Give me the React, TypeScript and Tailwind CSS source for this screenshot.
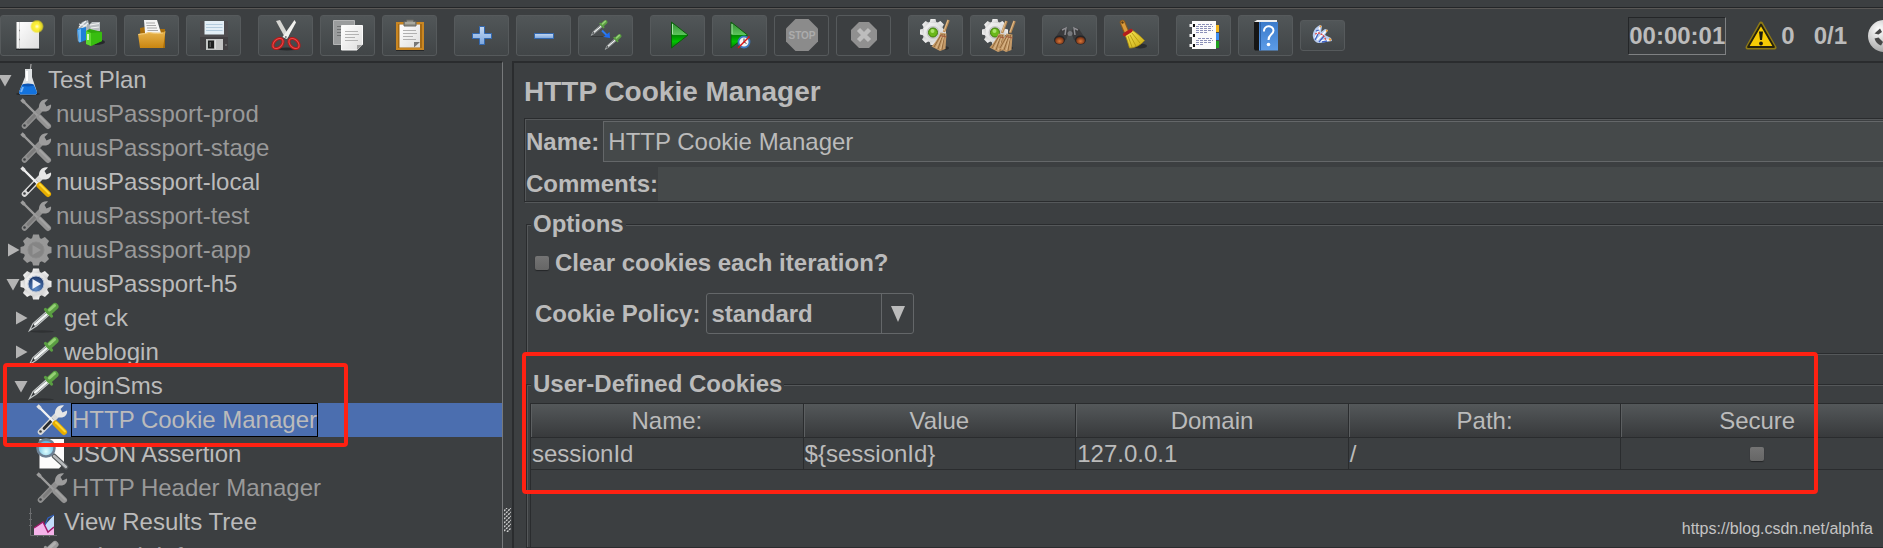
import type { ReactNode } from 'react';

type IconProps = { children: ReactNode; size?: number };

function Icon({ children, size = 30 }: IconProps) {
  return (
    <svg
      width={size}
      height={size}
      viewBox={`0 0 ${size} ${size}`}
      className="block shrink-0 overflow-visible"
      aria-hidden="true"
    >
      {children}
    </svg>
  );
}

function Gradients() {
  return (
    <svg width="0" height="0" className="absolute" aria-hidden="true">
      <defs>
        <linearGradient id="paper" x1="0" y1="0" x2="1" y2="1">
          <stop offset="0" stopColor="#ffffff" />
          <stop offset="1" stopColor="#dedede" />
        </linearGradient>
        <radialGradient id="glow">
          <stop offset="0" stopColor="#fffde0" />
          <stop offset="0.35" stopColor="#fff23a" />
          <stop offset="0.75" stopColor="#f3e51c" stopOpacity="0.85" />
          <stop offset="1" stopColor="#f3e51c" stopOpacity="0" />
        </radialGradient>
        <linearGradient id="folder" x1="0" y1="0" x2="0" y2="1">
          <stop offset="0" stopColor="#e9b64f" />
          <stop offset="1" stopColor="#c98510" />
        </linearGradient>
        <linearGradient id="blue" x1="0" y1="0" x2="0" y2="1">
          <stop offset="0" stopColor="#c6d9f2" />
          <stop offset="1" stopColor="#7ba6de" />
        </linearGradient>
        <linearGradient id="play" x1="0" y1="0" x2="0" y2="1">
          <stop offset="0" stopColor="#2f8f2f" />
          <stop offset="0.48" stopColor="#5cc35c" />
          <stop offset="0.52" stopColor="#008a00" />
          <stop offset="0.75" stopColor="#00c400" />
          <stop offset="1" stopColor="#0a7a0a" />
        </linearGradient>
        <linearGradient id="book" x1="0" y1="0" x2="0" y2="1">
          <stop offset="0" stopColor="#3b7bcb" />
          <stop offset="1" stopColor="#5c9ce8" />
        </linearGradient>
        <linearGradient id="straw" x1="0" y1="0" x2="1" y2="1">
          <stop offset="0" stopColor="#f7ea5a" />
          <stop offset="1" stopColor="#c9a90f" />
        </linearGradient>
        <linearGradient id="gear" x1="0" y1="0" x2="1" y2="1">
          <stop offset="0" stopColor="#f6f6f6" />
          <stop offset="1" stopColor="#cfcfcf" />
        </linearGradient>
        <radialGradient id="steel" cx="0.35" cy="0.3" r="0.8">
          <stop offset="0" stopColor="#ffffff" />
          <stop offset="1" stopColor="#9c9c9c" />
        </radialGradient>
        <radialGradient id="lens" cx="0.5" cy="0.7" r="0.6">
          <stop offset="0" stopColor="#e0ffff" />
          <stop offset="1" stopColor="#5bb2dd" />
        </radialGradient>
        <radialGradient id="amber" cx="0.5" cy="0.6" r="0.6">
          <stop offset="0" stopColor="#d9773a" />
          <stop offset="1" stopColor="#6a2a10" />
        </radialGradient>
        <radialGradient id="navy" cx="0.5" cy="0.8" r="0.8">
          <stop offset="0" stopColor="#5a8ac8" />
          <stop offset="1" stopColor="#1c3668" />
        </radialGradient>
      </defs>
    </svg>
  );
}

const GEAR_TEETH = [0, 45, 90, 135, 180, 225, 270, 315];

function Gear({ cx, cy, r, fill }: { cx: number; cy: number; r: number; fill: string }) {
  return (
    <g fill={fill}>
      <circle cx={cx} cy={cy} r={r * 0.81} />
      {GEAR_TEETH.map((angle) => (
        <path
          key={angle}
          d={`M${cx - r * 0.27} ${cy - r * 0.7}L${cx - r * 0.19} ${cy - r}H${cx + r * 0.19}L${cx + r * 0.27} ${cy - r * 0.7}Z`}
          transform={`rotate(${angle} ${cx} ${cy})`}
        />
      ))}
    </g>
  );
}

function Pipette({ muted = false }: { muted?: boolean }) {
  const bulb = muted ? '#9a9a9a' : '#5a9e42';
  const shine = muted ? '#b0b0b0' : '#94d074';
  return (
    <g>
      <path
        d="M0.5 27.5 4 20.5 17 9 20 12 7.5 23Z"
        fill={muted ? '#8c8c8c' : '#303436'}
        stroke={muted ? '#a5a5a5' : '#c4c8c8'}
        strokeWidth="1.2"
      />
      <path d="M6 21.5 18 11" stroke={muted ? '#b5b5b5' : '#f2f5f5'} strokeWidth="2.4" strokeLinecap="round" />
      <path d="M16.500 6.500 22.500 13" stroke={bulb} strokeWidth="3.2" strokeLinecap="round" />
      <path d="M20.5 8.5 26 3.5" stroke={bulb} strokeWidth="7" strokeLinecap="round" />
      <path d="M20.5 7 25.500 2.5" stroke={shine} strokeWidth="3" strokeLinecap="round" />
    </g>
  );
}

function SamplerIcon({ muted = false }: { muted?: boolean }) {
  return (
    <Icon>
      <ellipse cx="13" cy="28.5" rx="12" ry="1.2" fill="#222426" opacity="0.5" />
      <Pipette muted={muted} />
    </Icon>
  );
}

function StrawBroom() {
  return (
    <g>
      <path d="M28.5 0 24 12" stroke="#b98a55" strokeWidth="2.6" />
      <path d="M28 0 24 11" stroke="#e2bf8d" strokeWidth="1" />
      <path d="M20.5 12.5 26.5 13.5 25.5 29 20 31 11.5 26.5C15 23 18.5 18 20.5 12.5Z" fill="#c49a68" />
      <path d="M21.5 14 14 27M23 14 18 29M24.5 14 22 30" stroke="#8d6337" strokeWidth="0.9" />
      <path d="M22.3 15 16 28M24 16 20.5 29" stroke="#e7c79c" strokeWidth="0.7" />
      <path d="M20 15.5 26.5 17" stroke="#a5583c" strokeWidth="1" />
    </g>
  );
}

function ClearGear() {
  return (
    <g>
      <Gear cx={13} cy={12} r={13} fill="url(#gear)" />
      <circle cx="13" cy="12.5" r="6.5" fill="#c6c6c6" />
      <circle cx="13" cy="12.5" r="4.5" fill="#6ab81a" stroke="#3f7d0c" />
      <circle cx="12.5" cy="11" r="2" fill="#a9e36a" />
    </g>
  );
}

function NewIcon() {
  return (
    <Icon>
      <path d="M4 29H28V30H4Z" fill="#242628" />
      <path d="M4.5 2H27V28.5H4.5Z" fill="url(#paper)" />
      <path d="M7.5 2V28.5" stroke="#cfcfcf" />
      <path d="M7 10.5H8M7 19.5H8" stroke="#888888" strokeWidth="1.5" />
      <circle cx="25" cy="6.5" r="7" fill="url(#glow)" />
    </Icon>
  );
}

function TemplatesIcon() {
  return (
    <Icon>
      <ellipse cx="22" cy="22" rx="9" ry="3" fill="#25282a" />
      <path d="M3 10 8 2 14 0 16 8 4 22Z" fill="#a9b2b8" />
      <path d="M5 7 12 1M7 9 14 3M5 4 13 6" stroke="#eef1f2" strokeWidth="1.2" />
      <path d="M15 5 18 2 26 2V11L16 12Z" fill="#b9bfc2" />
      <path d="M16 5 25 3.500M17 8 25 7" stroke="#f2f2f2" strokeWidth="1.2" />
      <path d="M3 9 12 7V20L5 23Z" fill="#1d7fd8" />
      <path d="M4 10 7 9V22L5 22Z" fill="#6db8f5" />
      <path d="M12 11 16 9 28 12V21L17 26 12 24Z" fill="#2fa90c" />
      <path d="M12 11 17 13V26L12 24Z" fill="#5ed82f" />
      <path d="M14 14V20" stroke="#f4fff0" strokeWidth="1.6" />
      <path d="M17 13 28 12V21L17 26Z" fill="#38bd10" />
    </Icon>
  );
}

function OpenIcon() {
  return (
    <Icon>
      <path d="M4 8 9 7 11 9H29V28H5Z" fill="#a96e0b" />
      <path d="M8 0H21L25 13H9Z" fill="#f5f5f5" />
      <path d="M10 3H19M10.5 5.5H20M11 8H21M11.5 10.5H22" stroke="#a7a7a7" />
      <path d="M2 14C7 13 10 13.5 13 12 17 13 22 13 27 12.5L29.5 11 27 28H4Z" fill="url(#folder)" />
      <path d="M2.5 14.5C7 13.5 10 14 13 12.5 18 13.5 23 13.5 27 13" stroke="#f4d084" fill="none" />
    </Icon>
  );
}

function SaveIcon() {
  return (
    <Icon>
      <path d="M2 1H30V30H3L2 29Z" fill="#4f4c4f" />
      <path d="M2 17H30V30H3L2 29Z" fill="#423f42" />
      <path d="M6.5 1H26V14.5H6.5Z" fill="#e4eef6" />
      <path d="M8 4.5H24.5M8 7.5H24.5M8 10.5H24.5" stroke="#b4cbdd" />
      <path d="M8 19H25V30H8Z" fill="#c3c3c3" />
      <path d="M10 20.5H16V28.5H10Z" fill="#1f1f1f" />
      <path d="M11.5 22H13V27H11.5Z" fill="#555555" />
      <path d="M17.5 20V29" stroke="#dddddd" />
      <circle cx="28" cy="25" r="1" fill="#777777" />
    </Icon>
  );
}

function CutIcon() {
  return (
    <Icon>
      <ellipse cx="17" cy="29" rx="11" ry="1.5" fill="#26292b" />
      <path d="M6 1 10 0 19 16 15.500 18.5Z" fill="#d6d6d2" />
      <path d="M24.5 0 26 2.500 17 19 12.5 17Z" fill="#f1f1ee" />
      <ellipse cx="8" cy="23.5" rx="6" ry="4" transform="rotate(-45 8 23.5)" fill="none" stroke="#b81818" strokeWidth="3" />
      <ellipse cx="24" cy="23.5" rx="6" ry="4" transform="rotate(45 24 23.5)" fill="none" stroke="#b81818" strokeWidth="3" />
      <ellipse cx="8" cy="23.5" rx="6" ry="4" transform="rotate(-45 8 23.5)" fill="none" stroke="#e84c4c" strokeWidth="1" />
      <ellipse cx="24" cy="23.5" rx="6" ry="4" transform="rotate(45 24 23.5)" fill="none" stroke="#e84c4c" strokeWidth="1" />
      <circle cx="15.8" cy="17" r="1" fill="#777777" />
    </Icon>
  );
}

function CopyIcon() {
  return (
    <Icon>
      <path d="M1.5 0.5H22.5V24.5H1.5Z" fill="#9a9c9d" stroke="#b3b4b5" />
      <path d="M5 6.5H9M5 9.5H9M5 12.5H9M5 15.5H9" stroke="#6f7172" />
      <path d="M9.5 5.5H30.5V24.5L25 30H9.5Z" fill="url(#paper)" stroke="#fafafa" />
      <path d="M13 11.5H26M13 14.5H27M13 17.5H23M13 20.5H26" stroke="#b3b3b3" />
      <path d="M25 30V25H30.5Z" fill="#a0a0a0" />
    </Icon>
  );
}

function PasteIcon() {
  return (
    <Icon>
      <path d="M2 30H30V31H2Z" fill="#26282a" />
      <path d="M3 3H29V29H3Z" fill="#a56a14" stroke="#c98622" strokeWidth="2" />
      <path d="M5.5 4.5H26V27.5H5.5Z" fill="url(#paper)" />
      <path d="M9 10.5H22M9 13.5H23M9 16.5H19M9 19.5H22" stroke="#b0b0b0" />
      <path d="M20 27.5V22H26Z" fill="#777777" />
      <path d="M10 1.5H12.5V0H19.5V1.5H22V6H10Z" fill="#8f8f86" stroke="#65655e" />
      <path d="M11 3H21" stroke="#c2c2b8" />
    </Icon>
  );
}

function AddIcon() {
  return (
    <Icon>
      <path
        d="M13.5 6.5H18.5V13.5H25.5V18.5H18.5V24.5H13.5V18.5H6.5V13.5H13.5Z"
        fill="url(#blue)"
        stroke="#3268b0"
      />
    </Icon>
  );
}

function RemoveIcon() {
  return (
    <Icon>
      <path d="M6.5 13.5H25.5V18.5H6.5Z" fill="url(#blue)" stroke="#3268b0" />
    </Icon>
  );
}

function ToggleIcon() {
  return (
    <Icon>
      <path d="M1 16.5H13" stroke="#2b2d2f" opacity="0.6" />
      <g transform="translate(1 0) scale(0.56)">
        <Pipette />
      </g>
      <g transform="translate(15 14) scale(0.56)">
        <Pipette />
      </g>
      <path d="M12 10.5 17 15.5" stroke="#2b7bf0" strokeWidth="2" />
      <path d="M20 18 13.500 17 19.500 12Z" fill="#1e6cf0" />
    </Icon>
  );
}

function StartIcon() {
  return (
    <Icon>
      <path d="M9.5 2 26 15 9.5 28Z" fill="url(#play)" stroke="#0c5c0c" />
      <path d="M10.5 4V14" stroke="#a9e3a9" />
    </Icon>
  );
}

function StartNoPauseIcon() {
  return (
    <Icon>
      <path d="M7 2 23.5 15 7 28Z" fill="url(#play)" stroke="#0c5c0c" />
      <path d="M8 4V14" stroke="#a9e3a9" />
      <circle cx="20" cy="22" r="5.5" fill="#f3f3f3" stroke="#3a78c0" strokeWidth="1.8" />
      <path d="M20 22V18.5M20 22 22.5 23.5" stroke="#444444" />
      <path d="M14 28 25.5 16.5" stroke="#dd1212" strokeWidth="1.5" />
    </Icon>
  );
}

function StopIcon() {
  return (
    <Icon>
      <path d="M9.5 -1H22.5L32 8.5V21.5L22.5 31H9.5L0 21.5V8.5Z" fill="#8b8b8b" />
      <text
        x="16"
        y="19"
        textAnchor="middle"
        fontFamily="'Liberation Sans', Arial, sans-serif"
        fontSize="10"
        fontWeight="bold"
        fill="#acacac"
      >
        STOP
      </text>
    </Icon>
  );
}

function ShutdownIcon() {
  return (
    <Icon>
      <path d="M11 2H21L29 10V20L21 28H11L3 20V10Z" fill="#909090" />
      <path d="M10.5 9.5 21.5 20.5M21.5 9.5 10.5 20.5" stroke="#bdbdbd" strokeWidth="4.5" />
    </Icon>
  );
}

function ClearIcon() {
  return (
    <Icon>
      <ellipse cx="23" cy="28" rx="6" ry="2" fill="#2c2e30" />
      <ClearGear />
      <StrawBroom />
    </Icon>
  );
}

function ClearAllIcon() {
  return (
    <Icon>
      <ellipse cx="25" cy="28" rx="6" ry="2" fill="#2c2e30" />
      <ClearGear />
      <g transform="translate(-4 1)">
        <StrawBroom />
      </g>
      <g transform="translate(4 1)">
        <StrawBroom />
      </g>
    </Icon>
  );
}

function SearchIcon() {
  return (
    <Icon>
      <path d="M7 9 12 7 15 12 12 20 4 22 1 18Z" fill="#3a3a3c" />
      <path d="M25 9 20 7 17 12 20 20 28 22 31 18Z" fill="#3a3a3c" />
      <path d="M8 10 12 8 11 15" stroke="#8c8c90" strokeWidth="1.5" fill="none" />
      <path d="M24 10 20 8 21 15" stroke="#8c8c90" strokeWidth="1.5" fill="none" />
      <circle cx="16" cy="13.5" r="2.5" fill="#77787c" />
      <ellipse cx="5.5" cy="20" rx="5.5" ry="4.5" fill="#252527" />
      <ellipse cx="26.5" cy="20" rx="5.5" ry="4.5" fill="#252527" />
      <ellipse cx="5.5" cy="20.5" rx="4.3" ry="3.5" fill="url(#amber)" />
      <ellipse cx="26.5" cy="20.5" rx="4.3" ry="3.5" fill="url(#amber)" />
    </Icon>
  );
}

function BroomIcon() {
  return (
    <Icon>
      <ellipse cx="24" cy="26" rx="7" ry="2.5" fill="#2b2d2f" />
      <path d="M6.5 2.5 10.500 12" stroke="#8d5a1c" strokeWidth="5.5" strokeLinecap="round" />
      <path d="M6.5 2.5 10.500 12" stroke="#d99b3c" strokeWidth="3.4" strokeLinecap="round" />
      <circle cx="6.5" cy="2.5" r="1.2" fill="#5b3a12" />
      <path
        d="M9 15 16 10C21 13 25 17 28.5 20.5 25 25 19 28 13.5 28 12 23 11 19 9 15Z"
        fill="url(#straw)"
        stroke="#a98a10"
        strokeWidth="0.8"
      />
      <path d="M12 16 16 27M14 15 20 26M16 13 24 23" stroke="#b5980f" strokeWidth="0.9" />
      <path d="M8.5 14.500 15 10.5" stroke="#b31d1d" strokeWidth="3.5" strokeLinecap="round" />
    </Icon>
  );
}

function LogIcon() {
  return (
    <Icon>
      <path d="M27 5H31V12H27Z" fill="#f2b51c" />
      <path d="M27 13H31V20H27Z" fill="#3f8ff0" />
      <path d="M27 21H31V28H27Z" fill="#1fa01f" />
      <path d="M4 1H28V29H4Z" fill="#fbfbfb" />
      <path
        d="M10 4.5H24M8 6.5H25M8 8.5H23M8 10.5H25M8 12.5H20M10 18.5H24M8 20.5H25M8 22.5H23M8 24.5H16"
        stroke="#8b90b8"
        strokeDasharray="3 1"
      />
      <path d="M1.5 5.5H6M1.5 15.5H6M1.5 25.5H6" stroke="#f5f5f5" strokeWidth="3" />
      <path d="M5 5.5H7M5 15.5H7M5 25.5H7" stroke="#111111" strokeWidth="3" />
    </Icon>
  );
}

function HelpIcon() {
  return (
    <Icon>
      <path d="M4 2 7 0H27V2H8Z" fill="#eeeeee" />
      <path d="M4 2H9V30.5H5L4 29Z" fill="#161616" />
      <path d="M9 2H28V30.5H9Z" fill="url(#book)" />
      <path d="M10.5 2V30.5" stroke="#2a61a8" />
      <path
        d="M14 11.5C13.5 4.5 23.5 5 23.5 10.5 23.5 14.5 18.5 14 18.5 20"
        fill="none"
        stroke="#ffffff"
        strokeWidth="2"
      />
      <circle cx="18.5" cy="24.5" r="1.8" fill="#ffffff" />
    </Icon>
  );
}

function FeatherIcon() {
  return (
    <Icon size={20}>
      <path d="M1 12C0 8 3 2 8 0L10 1 9 7 13 4 16 5 13 10 19 13 20 16 8 18C4 18 2 16 1 12Z" fill="#b9cdf0" />
      <path d="M3 13 8 2M5 15 14 6M7 16 18 15" stroke="#ffffff" strokeWidth="1.5" />
      <path d="M3 15 6 9M7 17 12 11M4 6 7 5M10 17 15 16" stroke="#3f62c4" strokeWidth="1.3" />
      <path d="M3 9 7 8 11 10 14 15" stroke="#e03d3d" strokeWidth="1.2" fill="none" strokeDasharray="2 1" />
      <path d="M8 1 9 2M14 5.5 15.5 6M17 14 19 15" stroke="#f29a2e" strokeWidth="2" />
    </Icon>
  );
}

function FlaskIcon() {
  return (
    <Icon>
      <ellipse cx="15" cy="29" rx="12" ry="1.5" fill="#222426" />
      <path d="M17 8 18 -1" stroke="#a8a8a8" strokeWidth="1.2" />
      <path d="M12 4H19V12L24 27C24 29 23 29.5 22 29.5H8C7 29.5 6 29 6 27L12 12Z" fill="#dfe2e4" />
      <path d="M9 20H21L24 27C24 29 23 29.5 22 29.5H8C7 29.5 6 29 6 27Z" fill="#1372dd" />
      <ellipse cx="15" cy="20" rx="6" ry="1.5" fill="#0b54b4" />
      <path d="M8 27 10 22" stroke="#7ab5f5" strokeWidth="2" />
      <path d="M14 6V16" stroke="#ffffff" strokeWidth="2" />
    </Icon>
  );
}

function ToolsIcon({ muted = false }: { muted?: boolean }) {
  return (
    <Icon>
      <path d="M3.5 27 21 9" stroke={muted ? '#8f8f8f' : '#d9d9d9'} strokeWidth="5.5" strokeLinecap="round" />
      <path d="M7 23.5 15 15" stroke={muted ? '#7c7c7c' : '#2a2c2e'} strokeWidth="2.8" strokeLinecap="round" />
      <circle cx="3.5" cy="26.5" r="1.3" fill="#3c3f41" />
      <path
        d="M18 9.500C17.500 4 21 -0.5 27 0.5L23.500 4 25.500 7.500 30 5.500C31 10.500 26 14 20.500 12Z"
        fill={muted ? '#9c9c9c' : '#e6e6e6'}
      />
      <path d="M2 2 17 17" stroke={muted ? '#9c9c9c' : '#f2f2f2'} strokeWidth="2.4" />
      <path d="M0.5 0.5 3.5 3.5" stroke={muted ? '#9c9c9c' : '#e2e2e2'} strokeWidth="3.4" />
      <path d="M18.5 18.5 27 27" stroke={muted ? '#939393' : '#e6ac00'} strokeWidth="6" strokeLinecap="round" />
      <path d="M19 17.5 28 26.5" stroke={muted ? '#a2a2a2' : '#ffd931'} strokeWidth="2" strokeLinecap="round" />
    </Icon>
  );
}

function GroupIcon({ muted = false }: { muted?: boolean }) {
  return (
    <Icon>
      <Gear cx={15} cy={15} r={15.5} fill={muted ? '#989898' : 'url(#gear)'} />
      <circle
        cx="15"
        cy="15"
        r="8"
        fill={muted ? '#858585' : 'url(#navy)'}
        stroke={muted ? '#8b8b8b' : '#b9c3d3'}
      />
      <path d="M11.500 10 20 15 11.500 20Z" fill={muted ? '#989898' : '#f0f4fa'} />
    </Icon>
  );
}

function AssertionIcon() {
  return (
    <Icon>
      <path d="M2.5 0H27V24L22 29.5H2.5Z" fill="#fcfcfc" />
      <path d="M17 17 29 28" stroke="#55585a" strokeWidth="5" strokeLinecap="round" />
      <path d="M17 17 29 28" stroke="#b9bcbe" strokeWidth="2.5" strokeLinecap="round" />
      <circle cx="9" cy="9" r="8.5" fill="url(#lens)" stroke="#6d8094" strokeWidth="2.5" />
    </Icon>
  );
}

function ResultsIcon() {
  return (
    <Icon>
      <path
        d="M1.5 1V28.5H28M0 6.5H3M0 12.5H3M0 18.5H3M8.5 27V30M14.5 27V30M20.5 27V30"
        stroke="#6a6c6e"
        fill="none"
      />
      <path d="M16 18 25 8V22L19 25 14 19Z" fill="#c3dcfa" />
      <path d="M16 18 19 11 25 8" stroke="#2f5fc0" strokeWidth="1.2" fill="none" />
      <path d="M5 21 14 15 19 25 25 19V28H5Z" fill="#f5b3ea" />
      <path d="M5 21 14 15 19 25 25 20" stroke="#a01a6a" strokeWidth="1.5" fill="none" />
    </Icon>
  );
}

function WarningIcon() {
  return (
    <svg width="32" height="30" viewBox="0 0 32 30" aria-hidden="true">
      <path
        d="M16 2.5 29.5 26.5H2.5Z"
        fill="#f7cc05"
        stroke="#8e7a14"
        strokeWidth="4"
        strokeLinejoin="round"
      />
      <path
        d="M16 3.5 29 26H3Z"
        fill="#f7cc05"
        stroke="#25220f"
        strokeWidth="1.8"
        strokeLinejoin="round"
      />
      <path d="M14 10.5H18L17 19H15Z" fill="#1b1a10" />
      <circle cx="16" cy="22.5" r="1.9" fill="#1b1a10" />
    </svg>
  );
}

function StatusIcon() {
  return (
    <svg width="32" height="32" viewBox="0 0 32 32" className="shrink-0" aria-hidden="true">
      <circle cx="16" cy="16" r="16" fill="url(#steel)" />
      <path d="M6.500 13.500 12 8.500 14 12 10.500 14.500Z" fill="#474747" />
      <path d="M6.500 18.500 10.500 17.500 15 22 13 25.500C10 24.500 7.500 22 6.500 18.500Z" fill="#474747" />
    </svg>
  );
}

type Tool = { label: string; icon: ReactNode; disabled?: boolean };

const toolGroups: Tool[][] = [
  [
    { label: 'New', icon: <NewIcon /> },
    { label: 'Templates', icon: <TemplatesIcon /> },
    { label: 'Open', icon: <OpenIcon /> },
    { label: 'Save', icon: <SaveIcon /> },
  ],
  [
    { label: 'Cut', icon: <CutIcon /> },
    { label: 'Copy', icon: <CopyIcon /> },
    { label: 'Paste', icon: <PasteIcon /> },
  ],
  [
    { label: 'Expand All', icon: <AddIcon /> },
    { label: 'Collapse All', icon: <RemoveIcon /> },
    { label: 'Toggle', icon: <ToggleIcon /> },
  ],
  [
    { label: 'Start', icon: <StartIcon /> },
    { label: 'Start no pauses', icon: <StartNoPauseIcon /> },
    { label: 'Stop', icon: <StopIcon />, disabled: true },
    { label: 'Shutdown', icon: <ShutdownIcon />, disabled: true },
  ],
  [
    { label: 'Clear', icon: <ClearIcon /> },
    { label: 'Clear All', icon: <ClearAllIcon /> },
  ],
  [
    { label: 'Search', icon: <SearchIcon /> },
    { label: 'Reset Search', icon: <BroomIcon /> },
  ],
  [
    { label: 'Function Helper', icon: <LogIcon /> },
    { label: 'Help', icon: <HelpIcon /> },
  ],
];

function Toolbar() {
  return (
    <header className="mt-[7px] flex shrink-0 items-center border-t border-[#242628] pt-[7px] pb-[5px] shadow-[inset_0_1px_0_#5a5856]">
      <div className="flex shrink-0 gap-[17px]">
        {toolGroups.map((group) => (
          <div key={group[0].label} className="flex gap-[7px]">
            {group.map((tool) => (
              <button
                key={tool.label}
                type="button"
                aria-label={tool.label}
                disabled={tool.disabled}
                className={`flex h-[41px] w-[55px] items-center justify-center rounded-[3px] border border-[#565a5c] pr-px pb-px ${
                  tool.disabled ? '' : 'bg-linear-to-b from-[#515658] to-[#414547]'
                }`}
              >
                {tool.icon}
              </button>
            ))}
          </div>
        ))}
      </div>
      <button
        type="button"
        aria-label="About"
        className="ml-[7px] flex h-[31px] w-[45px] shrink-0 items-center justify-center rounded-[3px] border border-[#565a5c] bg-linear-to-b from-[#515658] to-[#414547] pr-px pb-px"
      >
        <FeatherIcon />
      </button>
      <div className="-mr-[17px] ml-auto flex shrink-0 items-center text-[24px] leading-[28px] font-bold">
        <span className="mr-[19px] border border-t-[#242628] border-r-[#7f8183] border-b-[#7f8183] border-l-[#242628] py-1">
          00:00:01
        </span>
        <WarningIcon />
        <span className="ml-1">0</span>
        <span className="mr-[21px] ml-[19px]">0/1</span>
        <StatusIcon />
      </div>
    </header>
  );
}

type TreeNode = {
  label: string;
  level: number;
  icon: ReactNode;
  arrow?: 'open' | 'closed';
  disabled?: boolean;
  selected?: boolean;
};

const treeNodes: TreeNode[] = [
  { label: 'Test Plan', level: 0, icon: <FlaskIcon />, arrow: 'open' },
  { label: 'nuusPassport-prod', level: 1, icon: <ToolsIcon muted />, disabled: true },
  { label: 'nuusPassport-stage', level: 1, icon: <ToolsIcon muted />, disabled: true },
  { label: 'nuusPassport-local', level: 1, icon: <ToolsIcon /> },
  { label: 'nuusPassport-test', level: 1, icon: <ToolsIcon muted />, disabled: true },
  { label: 'nuusPassport-app', level: 1, icon: <GroupIcon muted />, arrow: 'closed', disabled: true },
  { label: 'nuusPassport-h5', level: 1, icon: <GroupIcon />, arrow: 'open' },
  { label: 'get ck', level: 2, icon: <SamplerIcon />, arrow: 'closed' },
  { label: 'weblogin', level: 2, icon: <SamplerIcon />, arrow: 'closed' },
  { label: 'loginSms', level: 2, icon: <SamplerIcon />, arrow: 'open' },
  { label: 'HTTP Cookie Manager', level: 3, icon: <ToolsIcon />, selected: true },
  { label: 'JSON Assertion', level: 3, icon: <AssertionIcon /> },
  { label: 'HTTP Header Manager', level: 3, icon: <ToolsIcon muted />, disabled: true },
  { label: 'View Results Tree', level: 2, icon: <ResultsIcon /> },
  { label: 'getLoginInfo', level: 2, icon: <SamplerIcon muted />, disabled: true },
];

const levelPadding = ['pl-0', 'pl-2', 'pl-4', 'pl-6'];

function TreeRow({ node }: { node: TreeNode }) {
  return (
    <li
      className={`flex h-[34px] items-center ${levelPadding[node.level]} ${
        node.selected ? 'bg-[#4b6eaf]' : ''
      } ${node.disabled ? 'text-[#999999]' : ''}`}
    >
      <svg width="13" height="14" viewBox="0 0 13 14" className="shrink-0 overflow-visible" aria-hidden="true">
        {node.arrow === 'open' && <path d="M-1.5 2H11.5L5 13.5Z" fill="#b4b4b4" />}
        {node.arrow === 'closed' && <path d="M0 0.5V13.5L11.5 7Z" fill="#b4b4b4" />}
      </svg>
      {node.icon}
      <span
        className={`ml-1 border leading-[32px] whitespace-nowrap ${
          node.selected ? 'border-black' : 'border-transparent'
        }`}
      >
        {node.label}
      </span>
    </li>
  );
}

function CheckBox({ id, label }: { id: string; label?: string }) {
  return (
    <input
      id={id}
      type="checkbox"
      aria-label={label}
      className="block size-[14px] shrink-0 appearance-none rounded-[2px] bg-linear-to-b from-[#747474] to-[#666666] shadow-[0_1px_1px_#242628]"
    />
  );
}

const columns = ['Name:', 'Value', 'Domain', 'Path:', 'Secure'];
const cookie = ['sessionId', '${sessionId}', '127.0.0.1', '/'];

const etched = 'border border-[#2a2c2e] shadow-[1px_1px_0_#55585a,inset_1px_1px_0_#55585a]';

function CookieTable() {
  return (
    <div className="mt-[5px] grow border-t border-l border-[#2a2c2e]">
      <table className="w-full table-fixed border-separate border-spacing-0">
        <thead>
          <tr className="bg-linear-to-b from-[#54585a] to-[#37393b]">
            {columns.map((column) => (
              <th
                key={column}
                className="h-[34px] border-r border-b border-[#2a2c2e] p-0 font-normal shadow-[inset_1px_0_0_#5c5f61]"
              >
                {column}
              </th>
            ))}
          </tr>
        </thead>
        <tbody>
          <tr>
            {cookie.map((value) => (
              <td key={value} className="h-[32px] border-r border-b border-[#2a2c2e] p-0 pl-px">
                {value}
              </td>
            ))}
            <td className="h-[32px] border-r border-b border-[#2a2c2e] p-0">
              <div className="flex justify-center">
                <CheckBox id="secure" label="Secure" />
              </div>
            </td>
          </tr>
        </tbody>
      </table>
    </div>
  );
}

function CookieManager() {
  return (
    <main className="min-w-0 grow overflow-hidden border-t-2 border-l-2 border-[#2a2c2e]">
      <div className="-mr-[15px] flex h-full flex-col pt-[13px] pl-[10px]">
        <h1 className="text-[28px] leading-[32px] font-bold">HTTP Cookie Manager</h1>

        <div className={`mt-[10px] flex flex-col gap-[5px] pt-[2px] pl-px ${etched}`}>
          <div className="flex items-center gap-1">
            <label htmlFor="name" className="font-bold">
              Name:
            </label>
            <input
              id="name"
              defaultValue="HTTP Cookie Manager"
              className="h-[41px] min-w-0 grow border border-[#646769] bg-[#45494a] pl-1 outline-none"
            />
          </div>
          <div className="flex items-center">
            <label htmlFor="comments" className="font-bold">
              Comments:
            </label>
            <input id="comments" className="h-[34px] min-w-0 grow bg-[#45494a] pl-1 outline-none" />
          </div>
        </div>

        <fieldset className={`mt-2 ml-[2px] min-w-0 pb-[19px] pl-[3px] font-bold ${etched}`}>
          <legend className="ml-px bg-[#3c3f41] px-[2px]">Options</legend>
          <div className="mt-[11px] ml-[5px] flex items-center gap-[6px]">
            <CheckBox id="clear-each" />
            <label htmlFor="clear-each">Clear cookies each iteration?</label>
          </div>
          <div className="mt-4 ml-[5px] flex items-center gap-[6px]">
            <label htmlFor="policy">Cookie Policy:</label>
            <div className="relative">
              <select
                id="policy"
                className="block h-[41px] w-[208px] appearance-none rounded-[3px] border border-[#646769] bg-transparent pl-1 font-bold outline-none"
              >
                <option>standard</option>
              </select>
              <span className="pointer-events-none absolute inset-y-0 right-0 flex w-[33px] items-center justify-center border-l border-[#646769]">
                <svg width="14" height="16" viewBox="0 0 14 16" aria-hidden="true">
                  <path d="M0 0H14L7 16Z" fill="#bbbbbb" />
                </svg>
              </span>
            </div>
          </div>
        </fieldset>

        <fieldset className={`mt-4 ml-[2px] flex min-w-0 grow flex-col pr-[3px] pl-[3px] ${etched}`}>
          <legend className="ml-px bg-[#3c3f41] px-[2px] font-bold">User-Defined Cookies</legend>
          <CookieTable />
        </fieldset>
      </div>
    </main>
  );
}

export default function App() {
  return (
    <div className="relative flex h-screen flex-col overflow-hidden bg-[#3c3f41] font-['Liberation_Sans',Arial,sans-serif] text-[24px] leading-[28px] text-[#bbbbbb]">
      <Gradients />
      <Toolbar />
      <div className="flex min-h-0 grow">
        <nav className="w-[503px] shrink-0 overflow-hidden border-t-2 border-r border-t-[#2a2c2e] border-r-[#77797b]">
          <ul>
            {treeNodes.map((node) => (
              <TreeRow key={node.label} node={node} />
            ))}
          </ul>
        </nav>
        <div className="flex w-[9px] shrink-0 flex-col items-center justify-end pb-4">
          <svg width="7" height="24" viewBox="0 0 7 24" aria-hidden="true">
            <path
              d="M0 3 3 0M0 7 7 0M0 11 7 4M0 15 7 8M0 19 7 12M0 23 7 16M3 24 7 20"
              stroke="#d0d0d0"
              strokeWidth="1.4"
              strokeDasharray="2 1"
            />
          </svg>
        </div>
        <CookieManager />
      </div>

      <div className="pointer-events-none absolute top-[363px] left-[3px] h-[84px] w-[345px] rounded-[4px] border-4 border-[#ff2112]" />
      <div className="pointer-events-none absolute top-[352px] right-[65px] left-[522px] h-[142px] rounded-[4px] border-4 border-[#ff2112]" />
      <span className="absolute right-[10px] bottom-[9px] text-[16px] leading-[20px] text-[#c4c4c4]">
        https://blog.csdn.net/alphfa
      </span>
    </div>
  );
}
